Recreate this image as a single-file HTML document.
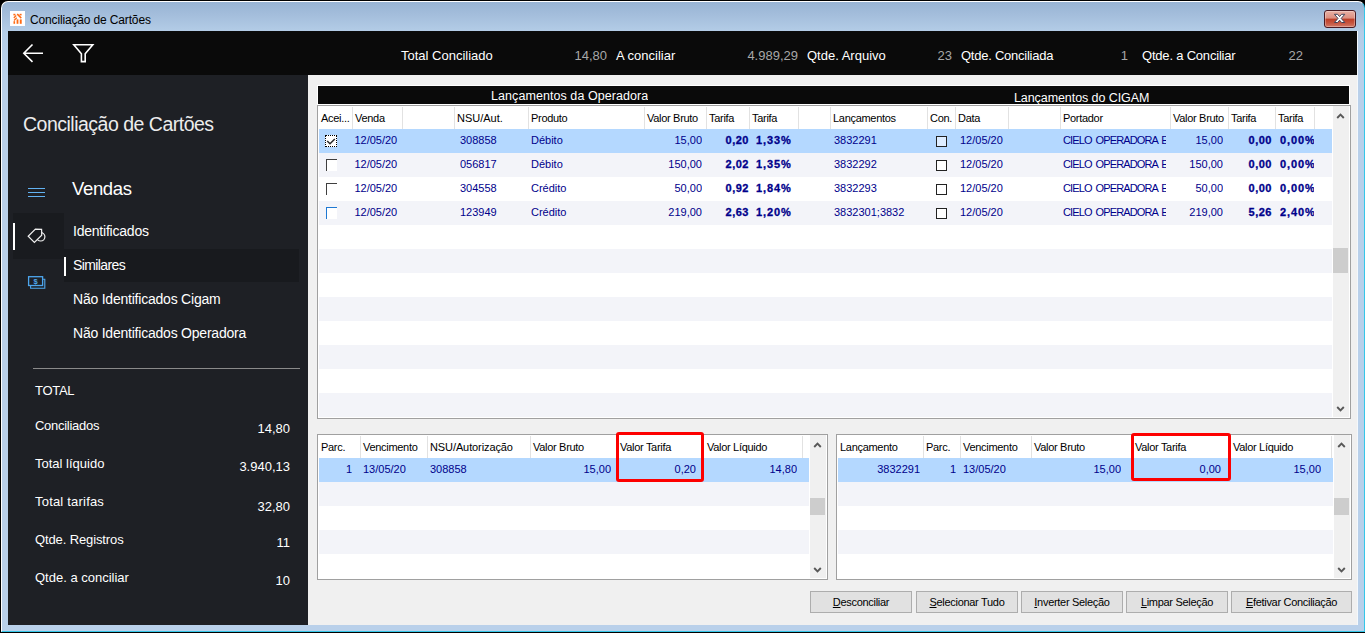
<!DOCTYPE html>
<html lang="pt-BR">
<head>
<meta charset="utf-8">
<title>Conciliação de Cartões</title>
<style>
*{box-sizing:border-box;margin:0;padding:0}
html,body{width:1365px;height:633px;overflow:hidden;background:#000}
body{position:relative;font-family:"Liberation Sans","DejaVu Sans",sans-serif;font-size:11px;color:#000}
.abs{position:absolute}
#frame{position:absolute;left:1px;top:1px;width:1364px;height:631px;border-radius:7px 7px 0 0;
 background:linear-gradient(180deg,#98b4d4 0,#a3bddb 12px,#b4cde7 30px,#b9d0ea 60px,#b9d0ea 100%);border:1px solid #fff;border-right-color:#35c6e8;border-bottom-color:#35c6e8}
#title{left:30px;top:12px;font-size:12px;letter-spacing:-0.15px;color:#000;white-space:nowrap;line-height:16px}
#appicon{left:10px;top:11px}
#close{left:1324px;top:10px;width:32px;height:18px;border-radius:3px;border:1px solid #4a1a22;
 background:linear-gradient(180deg,#e9b0a4 0,#dc8f80 45%,#bd3e27 50%,#c65540 75%,#d27a68 100%);box-shadow:inset 0 0 0 1px rgba(255,255,255,.3)}
#toolbar{left:8px;top:31px;width:1350px;height:44px;background:#0a0a0a}
#sidebar{left:8px;top:75px;width:300px;height:550px;background:#1e2025}
#content{left:308px;top:75px;width:1050px;height:550px;background:#f0f0f0}
.tb{position:absolute;top:48px;font-size:13px;line-height:16px;white-space:nowrap;color:#fff}
.tb.v{color:#a8a8a8;text-align:right}
.sb{position:absolute;color:#fff;white-space:nowrap}
.sb.m{font-size:14px;line-height:18px;letter-spacing:-0.22px}
.sb.l{font-size:13px;line-height:16px}
.sb.rv{left:190px;width:100px;text-align:right}
.bandt{color:#fff;font-size:12.5px;line-height:16px;white-space:nowrap}
.grid{position:absolute;background:#fff;border:1px solid #a0a0a0;overflow:hidden}
.row{position:absolute;left:0;height:24px}
.alt{background:#f3f4f9}
.sel{background:#b4d8ff}
.hc{position:absolute;top:0;height:24px;line-height:22px;border-right:1px solid #e2e2e2;border-image:linear-gradient(180deg,#fff 0,#fff 2px,#e2e2e2 2px,#e2e2e2 100%) 1;padding-left:2px;letter-spacing:-0.3px;white-space:nowrap;overflow:hidden;color:#000}
.c{position:absolute;height:24px;line-height:23px;white-space:nowrap;overflow:hidden;color:#00008b}
.r{text-align:right}
.b{font-weight:bold;letter-spacing:0.9px;-webkit-text-stroke:0.3px #00008b}
#g2 .hc,#g3 .hc{line-height:24px}
#g1 .hc{line-height:24px}
.r.b{letter-spacing:0.5px;padding-right:0}
.btn{position:absolute;top:591px;height:22px;border:1px solid #adadad;background:#e1e1e1;text-align:center;line-height:20px;font-size:11px;color:#000;white-space:nowrap;letter-spacing:-0.3px}
.btn u{text-decoration:underline}
.sbar{position:absolute;background:#f0f0f0;width:17px}
.thumb{position:absolute;left:0px;width:15px;background:#cdcdcd}
.cb{position:absolute;width:12px;height:12px;background:#fff}
</style>
</head>
<body>
<div id="frame"></div>
<svg id="appicon" class="abs" width="15" height="15" viewBox="0 0 15 15"><rect width="15" height="15" fill="#fff"/><g fill="#ff6a13" stroke="none"><rect x="3.4" y="2.8" width="2" height="1.6"/><rect x="9.6" y="2.8" width="2" height="1.6"/><path d="M6.6 3.4 L7.8 2.6 L11.8 6.6 L10.8 7.8 Z"/><path d="M3.4 6.2 L5.8 4 L6.6 5 L4.2 7.4 Z"/><path d="M3.6 9 L6.4 6.2 L7.2 7.2 L4.4 10 Z"/><rect x="3.5" y="10.2" width="1.6" height="2.6"/><rect x="6.6" y="8.4" width="1.8" height="4.4"/><rect x="9.8" y="8.4" width="1.9" height="4.4"/></g></svg>
<div id="title" class="abs">Conciliação de Cartões</div>
<div id="close" class="abs"><svg width="30" height="16" viewBox="0 0 30 16" style="display:block"><g fill="#fff" stroke="#41445a" stroke-width="1" stroke-linejoin="round"><path d="M9.4 3.3 H12.6 L14.6 5.6 L16.6 3.3 H19.8 L16.2 7.4 L19.8 11.5 H16.6 L14.6 9.2 L12.6 11.5 H9.4 L13 7.4 Z"/></g></svg></div>
<div id="toolbar" class="abs"></div>
<div id="sidebar" class="abs"></div>
<div id="content" class="abs"></div>
<div class="abs" style="left:1357px;top:31px;width:1px;height:594px;background:#f4f8fc"></div>
<!--TOOLBAR-->
<svg class="abs" style="left:22px;top:43px" width="24" height="21" viewBox="0 0 24 21"><path d="M10.5 1.5 L1.8 10.2 L10.5 18.9 M1.8 10.2 H21" fill="none" stroke="#fff" stroke-width="1.6"/></svg>
<svg class="abs" style="left:72px;top:43px" width="23" height="21" viewBox="0 0 23 21"><path d="M1.8 1.8 H20.8 L13.2 10.8 V18.6 H9.4 V10.8 Z" fill="none" stroke="#fff" stroke-width="1.6" stroke-linejoin="miter"/></svg>
<div class="tb" id="t1" style="left:401px">Total Conciliado</div>
<div class="tb v" id="t2" style="left:540px;width:67px">14,80</div>
<div class="tb" id="t3" style="left:616px">A conciliar</div>
<div class="tb v" id="t4" style="left:720px;width:78px">4.989,29</div>
<div class="tb" id="t5" style="left:807px">Qtde. Arquivo</div>
<div class="tb v" id="t6" style="left:900px;width:52px">23</div>
<div class="tb" id="t7" style="left:961px;letter-spacing:-0.25px">Qtde. Conciliada</div>
<div class="tb v" id="t8" style="left:1090px;width:38px">1</div>
<div class="tb" id="t9" style="left:1142px;letter-spacing:-0.2px">Qtde. a Conciliar</div>
<div class="tb v" id="t10" style="left:1260px;width:43px">22</div>
<!--SIDEBAR-->
<div class="sb" id="s-title" style="left:23px;top:112px;font-size:19.5px;line-height:24px;letter-spacing:-0.5px;color:#ececec">Conciliação de Cartões</div>
<svg class="abs" style="left:28px;top:186px" width="18" height="12" viewBox="0 0 18 12" shape-rendering="crispEdges"><path d="M0 2.5 H17 M0 6.5 H17 M0 10.5 H17" stroke="#62b2f2" stroke-width="1" fill="none"/></svg>
<div class="sb" id="s-vendas" style="left:72px;top:178px;font-size:18.5px;line-height:22px;letter-spacing:-0.35px">Vendas</div>
<div class="abs" style="left:13px;top:213px;width:51px;height:46px;background:#191b1f"></div>
<div class="abs" style="left:13px;top:223px;width:2px;height:27px;background:#fff"></div>
<svg class="abs" style="left:27px;top:227px" width="20" height="18" viewBox="0 0 20 18"><circle cx="13.7" cy="9.8" r="4.2" fill="none" stroke="#f0f0f0" stroke-width="1.2"/><path d="M1.2 9.2 L8.4 2.1 L14.6 2.3 L14.7 8.3 L7.4 15.5 Z" fill="#191b1f" stroke="#f0f0f0" stroke-width="1.2" stroke-linejoin="miter"/></svg>
<svg class="abs" style="left:27px;top:275px" width="20" height="15" viewBox="0 0 20 15"><rect x="1.6" y="1.7" width="14" height="8.8" fill="none" stroke="#4da6ee" stroke-width="1.3"/><path d="M3.6 11 V13.3 H17.8 V4.2 H16" fill="none" stroke="#4da6ee" stroke-width="1.1"/><text x="8.6" y="8.9" font-size="7.5" font-weight="bold" fill="#4da6ee" text-anchor="middle" font-family="Liberation Sans, sans-serif">$</text></svg>
<div class="abs" style="left:64px;top:249px;width:235px;height:33px;background:#181a1e"></div>
<div class="abs" style="left:64px;top:257px;width:2px;height:19px;background:#fff"></div>
<div class="sb m" id="m1" style="left:73px;top:222px">Identificados</div>
<div class="sb m" id="m2" style="left:73px;top:256px;letter-spacing:-0.6px">Similares</div>
<div class="sb m" id="m3" style="left:73px;top:290px">Não Identificados Cigam</div>
<div class="sb m" id="m4" style="left:73px;top:324px">Não Identificados Operadora</div>
<div class="abs" style="left:33px;top:368px;width:267px;height:1px;background:#8a8a8a"></div>
<div class="sb l" id="l0" style="letter-spacing:-0.3px;left:35px;top:383px">TOTAL</div>
<div class="sb l" id="l1" style="letter-spacing:-0.28px;left:35px;top:418px">Conciliados</div>
<div class="sb l" id="l2" style="left:35px;top:456px">Total líquido</div>
<div class="sb l" id="l3" style="letter-spacing:0.2px;left:35px;top:494px">Total tarifas</div>
<div class="sb l" id="l4" style="letter-spacing:-0.12px;left:35px;top:532px">Qtde. Registros</div>
<div class="sb l" id="l5" style="left:35px;top:570px">Qtde. a conciliar</div>
<div class="sb l rv" style="top:421px">14,80</div>
<div class="sb l rv" style="top:459px">3.940,13</div>
<div class="sb l rv" style="top:499px">32,80</div>
<div class="sb l rv" style="top:535px">11</div>
<div class="sb l rv" style="top:573px">10</div>
<!--TOPGRID-->
<div class="abs" style="left:317px;top:85px;width:1033px;height:20px;background:#fff"></div>
<div class="abs" style="left:318px;top:86px;width:1031px;height:18px;background:#0a0a0a"></div>
<div class="abs bandt" id="bt1" style="left:491px;top:88px;height:16px;overflow:hidden;letter-spacing:0.07px">Lançamentos da Operadora</div>
<div class="abs bandt" id="bt2" style="left:1014px;top:90px;height:14px;overflow:hidden;letter-spacing:-0.08px">Lançamentos do CIGAM</div>
<div class="grid" id="g1" style="left:317px;top:105px;width:1034px;height:314px">
<div class="row sel" style="left:1px;top:23px;width:1013px"></div>
<div class="row alt" style="left:1px;top:47px;width:1013px"></div>
<div class="row alt" style="left:1px;top:95px;width:1013px"></div>
<div class="row alt" style="left:1px;top:143px;width:1013px"></div>
<div class="row alt" style="left:1px;top:191px;width:1013px"></div>
<div class="row alt" style="left:1px;top:239px;width:1013px"></div>
<div class="row alt" style="left:1px;top:287px;width:1013px"></div>
<div class="hc" style="left:0px;top:0;width:35px;height:23px;padding-left:3px">Acei...</div>
<div class="hc" style="left:35px;top:0;width:50px;height:23px">Venda</div>
<div class="hc" style="left:85px;top:0;width:52px;height:23px"></div>
<div class="hc" style="left:137px;top:0;width:74px;height:23px;letter-spacing:0">NSU/Aut.</div>
<div class="hc" style="left:211px;top:0;width:116px;height:23px">Produto</div>
<div class="hc" style="left:327px;top:0;width:62px;height:23px">Valor Bruto</div>
<div class="hc" style="left:389px;top:0;width:43px;height:23px">Tarifa</div>
<div class="hc" style="left:432px;top:0;width:49px;height:23px">Tarifa</div>
<div class="hc" style="left:481px;top:0;width:32px;height:23px"></div>
<div class="hc" style="left:513px;top:0;width:97px;height:23px">Lançamentos</div>
<div class="hc" style="left:610px;top:0;width:28px;height:23px;padding-left:2px">Con.</div>
<div class="hc" style="left:638px;top:0;width:53px;height:23px">Data</div>
<div class="hc" style="left:691px;top:0;width:52px;height:23px"></div>
<div class="hc" style="left:743px;top:0;width:110px;height:23px">Portador</div>
<div class="hc" style="left:853px;top:0;width:58px;height:23px">Valor Bruto</div>
<div class="hc" style="left:911px;top:0;width:47px;height:23px">Tarifa</div>
<div class="hc" style="left:958px;top:0;width:39px;height:23px">Tarifa</div>
<div class="c " style="left:36.4px;top:23px;width:47px">12/05/20</div>
<div class="c " style="left:142px;top:23px;width:68px">308858</div>
<div class="c " style="left:213px;top:23px;width:113px">Débito</div>
<div class="c r" style="left:332px;top:23px;width:52px">15,00</div>
<div class="c r b" style="left:392px;top:23px;width:39px">0,20</div>
<div class="c b" style="left:438px;top:23px;width:42px">1,33%</div>
<div class="c " style="left:516px;top:23px;width:44px">3832291</div>
<div class="c " style="left:642px;top:23px;width:48px">12/05/20</div>
<div class="c " style="left:745px;top:23px;width:103px;letter-spacing:-0.85px;word-spacing:1.5px">CIELO OPERADORA E</div>
<div class="c r" style="left:857px;top:23px;width:48px">15,00</div>
<div class="c r b" style="left:914px;top:23px;width:40px">0,00</div>
<div class="c b" style="left:962px;top:23px;width:34px">0,00%</div>
<div class="cb" style="left:7px;top:29px;border:1px dotted #000"><svg width="10" height="10" viewBox="0 0 10 10" style="display:block"><path d="M1.2 5 L4 7.8 L8.8 3" fill="none" stroke="#2a2a2a" stroke-width="1.5"/></svg></div>
<div class="cb" style="left:618px;top:30px;width:11px;height:11px;border:1px solid #222;background:#deedff"></div>
<div class="c " style="left:36.4px;top:47px;width:47px">12/05/20</div>
<div class="c " style="left:142px;top:47px;width:68px">056817</div>
<div class="c " style="left:213px;top:47px;width:113px">Débito</div>
<div class="c r" style="left:332px;top:47px;width:52px">150,00</div>
<div class="c r b" style="left:392px;top:47px;width:39px">2,02</div>
<div class="c b" style="left:438px;top:47px;width:42px">1,35%</div>
<div class="c " style="left:516px;top:47px;width:44px">3832292</div>
<div class="c " style="left:642px;top:47px;width:48px">12/05/20</div>
<div class="c " style="left:745px;top:47px;width:103px;letter-spacing:-0.85px;word-spacing:1.5px">CIELO OPERADORA E</div>
<div class="c r" style="left:857px;top:47px;width:48px">150,00</div>
<div class="c r b" style="left:914px;top:47px;width:40px">0,00</div>
<div class="c b" style="left:962px;top:47px;width:34px">0,00%</div>
<div class="cb" style="left:8px;width:11px;top:53px;border-left:1px solid #3f3f3f;border-top:1px solid #3f3f3f"></div>
<div class="cb" style="left:618px;top:54px;width:11px;height:11px;border:1px solid #222"></div>
<div class="c " style="left:36.4px;top:71px;width:47px">12/05/20</div>
<div class="c " style="left:142px;top:71px;width:68px">304558</div>
<div class="c " style="left:213px;top:71px;width:113px">Crédito</div>
<div class="c r" style="left:332px;top:71px;width:52px">50,00</div>
<div class="c r b" style="left:392px;top:71px;width:39px">0,92</div>
<div class="c b" style="left:438px;top:71px;width:42px">1,84%</div>
<div class="c " style="left:516px;top:71px;width:44px">3832293</div>
<div class="c " style="left:642px;top:71px;width:48px">12/05/20</div>
<div class="c " style="left:745px;top:71px;width:103px;letter-spacing:-0.85px;word-spacing:1.5px">CIELO OPERADORA E</div>
<div class="c r" style="left:857px;top:71px;width:48px">50,00</div>
<div class="c r b" style="left:914px;top:71px;width:40px">0,00</div>
<div class="c b" style="left:962px;top:71px;width:34px">0,00%</div>
<div class="cb" style="left:8px;width:11px;top:77px;border-left:1px solid #3f3f3f;border-top:1px solid #3f3f3f"></div>
<div class="cb" style="left:618px;top:78px;width:11px;height:11px;border:1px solid #222"></div>
<div class="c " style="left:36.4px;top:95px;width:47px">12/05/20</div>
<div class="c " style="left:142px;top:95px;width:68px">123949</div>
<div class="c " style="left:213px;top:95px;width:113px">Crédito</div>
<div class="c r" style="left:332px;top:95px;width:52px">219,00</div>
<div class="c r b" style="left:392px;top:95px;width:39px">2,63</div>
<div class="c b" style="left:438px;top:95px;width:42px">1,20%</div>
<div class="c " style="left:516px;top:95px;width:71px">3832301;3832</div>
<div class="c " style="left:642px;top:95px;width:48px">12/05/20</div>
<div class="c " style="left:745px;top:95px;width:103px;letter-spacing:-0.85px;word-spacing:1.5px">CIELO OPERADORA E</div>
<div class="c r" style="left:857px;top:95px;width:48px">219,00</div>
<div class="c r b" style="left:914px;top:95px;width:40px">5,26</div>
<div class="c b" style="left:962px;top:95px;width:34px">2,40%</div>
<div class="cb" style="left:8px;width:11px;top:101px;border-left:1px solid #1e78d2;border-top:1px solid #1e78d2"></div>
<div class="cb" style="left:618px;top:102px;width:11px;height:11px;border:1px solid #222"></div>
<div class="sbar" style="left:1015px;top:0;height:311px;width:16px"><div class="thumb" style="top:142px;height:25px"></div><svg class="abs" style="left:3px;top:7px" width="9" height="6" viewBox="0 0 9 6"><path d="M1.2 5 L4.5 1.7 L7.8 5" fill="none" stroke="#585858" stroke-width="1.9"/></svg><svg class="abs" style="left:3px;top:300px" width="9" height="6" viewBox="0 0 9 6"><path d="M1.2 1 L4.5 4.3 L7.8 1" fill="none" stroke="#585858" stroke-width="1.9"/></svg></div>
</div>
<!--BOTTOMGRIDS-->
<div class="grid" id="g2" style="left:317px;top:434px;width:511px;height:146px">
<div class="row sel" style="left:1px;top:23px;width:490px"></div>
<div class="row alt" style="left:1px;top:47px;width:490px"></div>
<div class="row alt" style="left:1px;top:95px;width:490px"></div>
<div class="hc" style="left:0px;top:0;width:43px;height:23px;padding-left:3px">Parc.</div>
<div class="hc" style="left:43px;top:0;width:67px;height:23px;padding-left:2px">Vencimento</div>
<div class="hc" style="left:110px;top:0;width:103px;height:23px;padding-left:2px;letter-spacing:-0.1px">NSU/Autorização</div>
<div class="hc" style="left:213px;top:0;width:87px;height:23px;padding-left:2px">Valor Bruto</div>
<div class="hc" style="left:300px;top:0;width:85px;height:23px;padding-left:2px">Valor Tarifa</div>
<div class="hc" style="left:385px;top:0;width:100px;height:23px;padding-left:4px">Valor Líquido</div>
<div class="c r" style="left:4px;top:23px;width:30px">1</div>
<div class="c " style="left:45px;top:23px;width:64px">13/05/20</div>
<div class="c " style="left:112px;top:23px;width:100px">308858</div>
<div class="c r" style="left:242px;top:23px;width:51px">15,00</div>
<div class="c r" style="left:332px;top:23px;width:46px">0,20</div>
<div class="c r" style="left:432px;top:23px;width:47px">14,80</div>
<div class="sbar" style="left:492px;top:0;height:143px;width:16px"><div class="thumb" style="top:63px;height:17px"></div><svg class="abs" style="left:3px;top:7px" width="9" height="6" viewBox="0 0 9 6"><path d="M1.2 5 L4.5 1.7 L7.8 5" fill="none" stroke="#585858" stroke-width="1.9"/></svg><svg class="abs" style="left:3px;top:132px" width="9" height="6" viewBox="0 0 9 6"><path d="M1.2 1 L4.5 4.3 L7.8 1" fill="none" stroke="#585858" stroke-width="1.9"/></svg></div>
</div>
<div class="grid" id="g3" style="left:836px;top:434px;width:516px;height:146px">
<div class="row sel" style="left:1px;top:23px;width:495px"></div>
<div class="row alt" style="left:1px;top:47px;width:495px"></div>
<div class="row alt" style="left:1px;top:95px;width:495px"></div>
<div class="hc" style="left:0px;top:0;width:87px;height:23px;padding-left:3px">Lançamento</div>
<div class="hc" style="left:87px;top:0;width:37px;height:23px;padding-left:2px">Parc.</div>
<div class="hc" style="left:124px;top:0;width:71px;height:23px;padding-left:2px">Vencimento</div>
<div class="hc" style="left:195px;top:0;width:101px;height:23px;padding-left:2px">Valor Bruto</div>
<div class="hc" style="left:296px;top:0;width:98px;height:23px;padding-left:2px">Valor Tarifa</div>
<div class="hc" style="left:394px;top:0;width:101px;height:23px;padding-left:2px">Valor Líquido</div>
<div class="c r" style="left:23px;top:23px;width:60px">3832291</div>
<div class="c r" style="left:93px;top:23px;width:26px">1</div>
<div class="c " style="left:126px;top:23px;width:68px">13/05/20</div>
<div class="c r" style="left:233px;top:23px;width:51px">15,00</div>
<div class="c r" style="left:333px;top:23px;width:51px">0,00</div>
<div class="c r" style="left:433px;top:23px;width:51px">15,00</div>
<div class="sbar" style="left:497px;top:0;height:143px;width:16px"><div class="thumb" style="top:63px;height:17px"></div><svg class="abs" style="left:3px;top:7px" width="9" height="6" viewBox="0 0 9 6"><path d="M1.2 5 L4.5 1.7 L7.8 5" fill="none" stroke="#585858" stroke-width="1.9"/></svg><svg class="abs" style="left:3px;top:132px" width="9" height="6" viewBox="0 0 9 6"><path d="M1.2 1 L4.5 4.3 L7.8 1" fill="none" stroke="#585858" stroke-width="1.9"/></svg></div>
</div>
<div class="abs" style="left:616px;top:432px;width:88px;height:50px;border:3px solid #fd0000;border-radius:3px"></div>
<div class="abs" style="left:1131px;top:433px;width:100px;height:48px;border:3px solid #fd0000;border-radius:3px"></div>
<!--BUTTONS-->
<div class="btn" style="left:810px;width:102px"><u>D</u>esconciliar</div>
<div class="btn" style="left:916px;width:102px"><u>S</u>elecionar Tudo</div>
<div class="btn" style="left:1021px;width:102px"><u>I</u>nverter Seleção</div>
<div class="btn" style="left:1126px;width:102px"><u>L</u>impar Seleção</div>
<div class="btn" style="left:1231px;width:121px"><u>E</u>fetivar Conciliação</div>
</body>
</html>
